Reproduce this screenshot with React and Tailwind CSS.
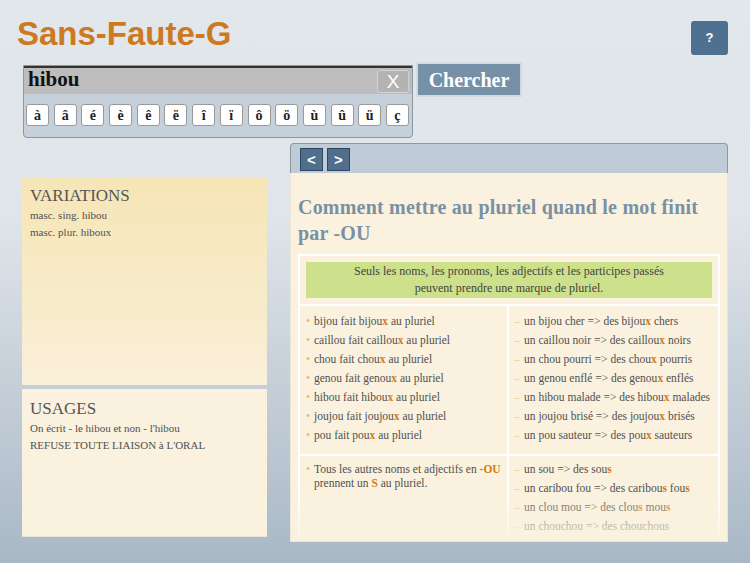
import React from 'react'

const accents = ['à', 'â', 'é', 'è', 'ê', 'ë', 'î', 'ï', 'ô', 'ö', 'ù', 'û', 'ü', 'ç']

// each line is a list of [text, highlighted]
const leftRules = [
  [['bijou fait bijou'], ['x', 1], [' au pluriel']],
  [['caillou fait caillou'], ['x', 1], [' au pluriel']],
  [['chou fait chou'], ['x', 1], [' au pluriel']],
  [['genou fait genou'], ['x', 1], [' au pluriel']],
  [['hibou fait hibou'], ['x', 1], [' au pluriel']],
  [['joujou fait joujou'], ['x', 1], [' au pluriel']],
  [['pou fait pou'], ['x', 1], [' au pluriel']],
]

const rightRules = [
  [['un bijou cher => des bijou'], ['x', 1], [' chers']],
  [['un caillou noir => des caillou'], ['x', 1], [' noirs']],
  [['un chou pourri => des chou'], ['x', 1], [' pourris']],
  [['un genou enflé => des genou'], ['x', 1], [' enflés']],
  [['un hibou malade => des hibou'], ['x', 1], [' malades']],
  [['un joujou brisé => des joujou'], ['x', 1], [' brisés']],
  [['un pou sauteur => des pou'], ['x', 1], [' sauteurs']],
]

const otherExamples = [
  [['un sou => des sou'], ['s', 1]],
  [['un caribou fou => des caribou'], ['s', 1], [' fou'], ['s', 1]],
  [['un clou mou => des clou'], ['s', 1], [' mou'], ['s', 1]],
  [['un chouchou => des chouchous']],
]

function Line({ parts }) {
  return parts.map(([text, hl], i) =>
    hl ? (
      <b key={i} className="text-[#d27a1c]">{text}</b>
    ) : (
      <span key={i}>{text}</span>
    )
  )
}

function Bullets({ lines, dash }) {
  return (
    <ul className="flex flex-col gap-[4px]">
      {lines.map((parts, i) => (
        <li key={i} className="flex gap-[3px] h-[15px] leading-[15px]">
          {dash ? (
            <span className="w-[7px] shrink-0 text-[#ebc89c]">–</span>
          ) : (
            <span className="w-[5px] shrink-0 text-[#e3b67e]">•</span>
          )}
          <span className="whitespace-nowrap">
            <Line parts={parts} />
          </span>
        </li>
      ))}
    </ul>
  )
}

export default function App() {
  return (
    <div className="w-[750px] h-[563px] overflow-hidden bg-[linear-gradient(to_bottom,#e2e7ec_0%,#e0e5ea_38%,#a9b8c6_100%)] font-['Liberation_Serif',serif] text-[#505050]">
      <div className="flex items-start justify-between pl-[17px] pr-[22px]">
        <h1 className="pt-[17px] text-[33px] leading-none font-bold text-[#cd791f] font-['Liberation_Sans',Arial,sans-serif]">
          Sans-Faute-G
        </h1>
        <button className="mt-[21px] w-[37px] h-[34px] rounded-[3px] bg-[#4f7191] text-white font-bold text-[13px] font-['Liberation_Sans',Arial,sans-serif]">
          ?
        </button>
      </div>

      <div className="flex items-start pl-[23px] mt-[7px]">
        <div className="mt-[3px] w-[390px] border border-[#8e979f] rounded-b-[4px] bg-[#c5d0da]">
          <div className="h-[28px] flex items-center justify-between bg-[#bdbdbd] border-t-2 border-[#333] pl-[4px] pr-[3px]">
            <span className="text-[21px] font-bold text-[#111] leading-none -mt-[4px]">hibou</span>
            <button className="w-[32px] h-[23px] rounded-[3px] bg-[#b3b3b3] border border-[#d2d2d2] text-white text-[19px] leading-none font-['Liberation_Sans',Arial,sans-serif]">
              X
            </button>
          </div>
          <div className="h-[43px] flex justify-between items-start pt-[10px] pl-[2px] pr-[3px]">
            {accents.map(a => (
              <button
                key={a}
                className="w-[23px] h-[22px] rounded-[3px] bg-white border border-[#9a9a9a] text-[14px] font-bold text-[#222]"
              >
                {a}
              </button>
            ))}
          </div>
        </div>
        <button className="ml-[3px] w-[106px] h-[35px] border-2 border-[#d3dbe2] bg-[#7690a7] text-white text-[20px] font-bold leading-none">
          Chercher
        </button>
      </div>

      <div className="flex items-start pl-[22px] mt-[5px]">
        <div className="mt-[34px] w-[245px] flex flex-col gap-[4px]">
          <div className="h-[208px] bg-[linear-gradient(to_bottom,#f6e5b6,#f8eccd_70%,#faf0da)] px-[8px] pt-[9px]">
            <h2 className="text-[17px] leading-[20px] text-[#555]">VARIATIONS</h2>
            <p className="text-[11px] leading-[17px] mt-[1px]">masc. sing. hibou</p>
            <p className="text-[11px] leading-[17px]">masc. plur. hiboux</p>
          </div>
          <div className="h-[148px] bg-[#faf1de] px-[8px] pt-[10px] border-b border-[#e9e4d8]">
            <h2 className="text-[17px] leading-[20px] text-[#555]">USAGES</h2>
            <p className="text-[11px] leading-[17px] mt-[1px]">On écrit - le hibou et non - l'hibou</p>
            <p className="text-[11px] leading-[17px]">REFUSE TOUTE LIAISON à L'ORAL</p>
          </div>
        </div>

        <div className="ml-[23px] w-[438px] h-[399px] flex flex-col">
          <div className="h-[30px] shrink-0 flex gap-[4px] items-start pt-[4px] pl-[9px] bg-[#bfcbd6] border border-b-0 border-[#8c99a5] rounded-t-[4px]">
            <button className="w-[23px] h-[23px] bg-[#4f6f8d] border border-[#2e4862] text-white font-bold text-[15px] leading-none font-['Liberation_Sans',Arial,sans-serif]">
              &lt;
            </button>
            <button className="w-[23px] h-[23px] bg-[#4f6f8d] border border-[#2e4862] text-white font-bold text-[15px] leading-none font-['Liberation_Sans',Arial,sans-serif]">
              &gt;
            </button>
          </div>
          <div className="relative flex-1 overflow-hidden bg-[#faf2de] border-x border-b border-[#ece6d6] px-[7px]">
            <h3 className="mt-[21px] text-[20px] tracking-[0.2px] leading-[26px] font-bold text-[#7a90a5]">
              Comment mettre au pluriel quand le mot finit <span className="whitespace-nowrap">par -OU</span>
            </h3>
            <div className="mt-[8px] border-2 border-white">
              <div className="p-[6px] border-b-2 border-white">
                <div className="bg-[#cde08b] text-center text-[12px] leading-[17px] text-[#444] py-[1px]">
                  Seuls les noms, les pronoms, les adjectifs et les participes passés
                  <br />
                  peuvent prendre une marque de pluriel.
                </div>
              </div>
              <div className="grid grid-cols-2 border-b-2 border-white text-[11.5px]">
                <div className="pl-[6px] pt-[8px] pb-[11px] border-r-2 border-white">
                  <Bullets lines={leftRules} />
                </div>
                <div className="pl-[5px] pt-[8px] pb-[11px]">
                  <Bullets lines={rightRules} dash />
                </div>
              </div>
              <div className="grid grid-cols-2 text-[11.5px]">
                <div className="pl-[6px] pt-[6px] pr-[2px] border-r-2 border-white">
                  <div className="flex gap-[3px] leading-[14px]">
                    <span className="w-[5px] shrink-0 text-[#e3b67e]">•</span>
                    <span>
                      Tous les autres noms et adjectifs{' '}
                      <span className="whitespace-nowrap">
                        en <b className="text-[#d27a1c]">-OU</b>
                      </span>{' '}
                      prennent un <b className="text-[#d27a1c]">S</b> au pluriel.
                    </span>
                  </div>
                </div>
                <div className="pl-[5px] pt-[6px] pb-[20px]">
                  <Bullets lines={otherExamples} dash />
                </div>
              </div>
            </div>
            <div className="absolute left-0 right-0 bottom-0 h-[50px] bg-[linear-gradient(to_bottom,rgba(250,242,222,0),rgba(250,242,222,0.9))]" />
          </div>
        </div>
      </div>
    </div>
  )
}
